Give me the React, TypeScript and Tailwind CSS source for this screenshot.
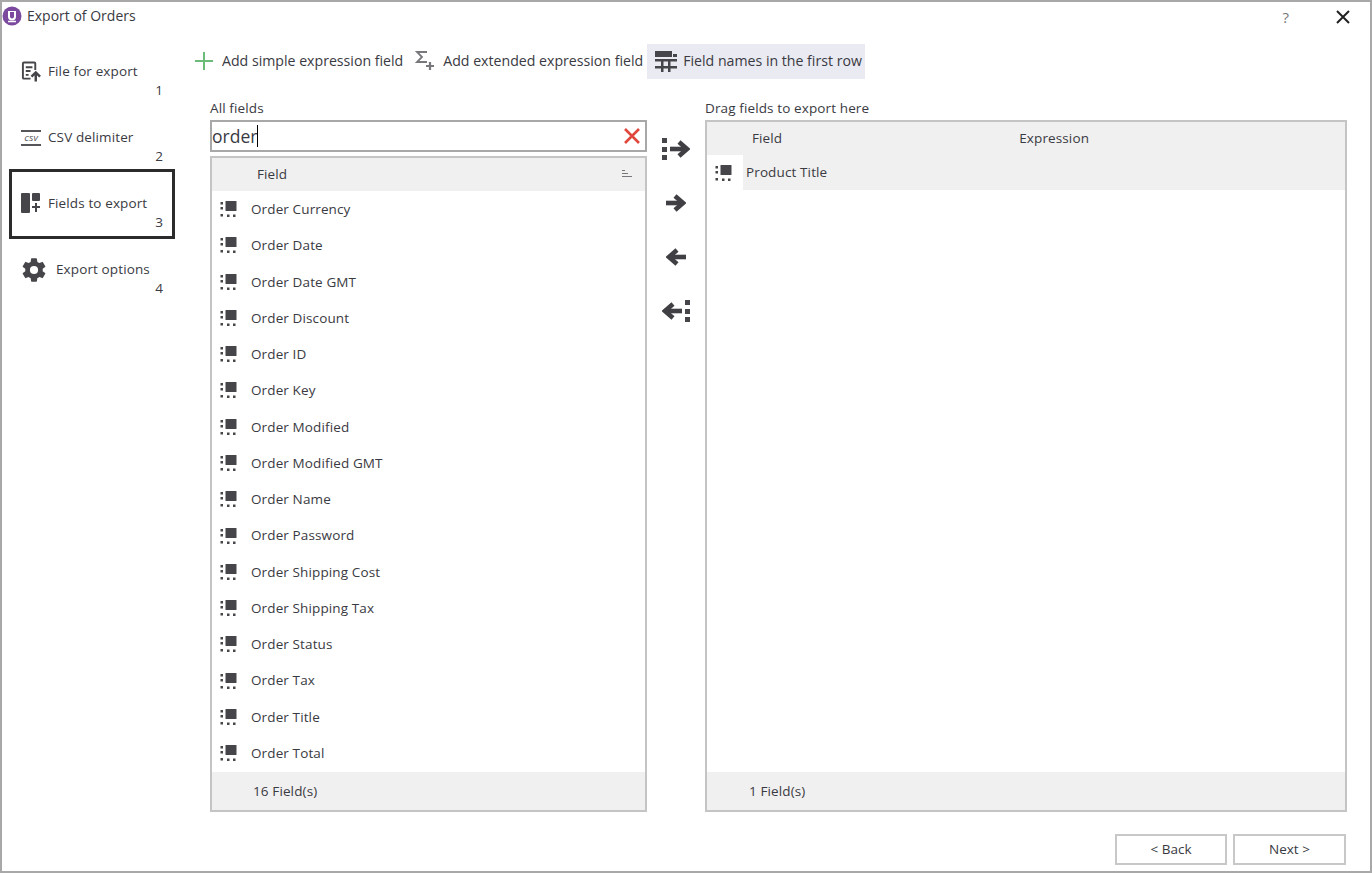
import React from "react";

const fields = ["Order Currency","Order Date","Order Date GMT","Order Discount","Order ID","Order Key","Order Modified","Order Modified GMT","Order Name","Order Password","Order Shipping Cost","Order Shipping Tax","Order Status","Order Tax","Order Title","Order Total"];

const FieldIcon = () => (
  <svg width="18" height="18" viewBox="0 0 18 18" fill="#45454a" className="shrink-0">
    <rect x="5.5" y="1" width="11" height="10" rx="0.5" />
    <rect x="0.5" y="2" width="2.5" height="2.5" /><rect x="0.5" y="7" width="2.5" height="2.5" /><rect x="0.5" y="14" width="2.5" height="2.5" />
    <rect x="7" y="14.5" width="2.5" height="2.5" /><rect x="13" y="14.5" width="2.5" height="2.5" />
  </svg>
);

const Arrow = ({ left = false }: { left?: boolean }) => (
  <svg width="20" height="18" viewBox="0 0 20 18" fill="none" stroke="#3f3f44" strokeWidth="4.6" className={left ? "rotate-180" : ""}>
    <path d="M0 9h16" /><path d="M9 2l8 7-8 7" />
  </svg>
);

const Dots = () => (
  <div className="flex flex-col gap-[3.5px]">
    <div className="w-[5px] h-[5px] bg-[#45454a]" /><div className="w-[5px] h-[5px] bg-[#45454a]" /><div className="w-[5px] h-[5px] bg-[#45454a]" />
  </div>
);

const NavItem = ({ icon, label, num, active, gap = "gap-2" }: { icon: React.ReactNode; label: string; num: string; active?: boolean; gap?: string }) => (
  <div className={`w-[166px] h-[70px] ml-[7px] flex flex-col ${active ? "border-[3px] border-[#2b2b2b]" : "border-[3px] border-transparent"}`}>
    <div className={`flex items-center ${gap} pl-[9px] pt-[22px] h-[41px]`}>
      <div className="w-[20px] h-[22px] flex items-center justify-center shrink-0">{icon}</div>
      <span>{label}</span>
    </div>
    <div className="text-right pr-[9px] leading-[18px]">{num}</div>
  </div>
);

export default function App() {
  return (
    <div className="w-[1372px] h-[873px] border-2 border-[#a8a8a8] bg-white flex flex-col overflow-hidden text-[13.5px] text-[#3a3a42] font-['Open_Sans','Noto_Sans',sans-serif]">
      <div className="h-[30px] flex items-start pt-[3px] shrink-0">
        <svg width="20" height="20" viewBox="0 0 20 20" className="mr-[5px] mt-[1px]">
          <circle cx="10" cy="10" r="9.5" fill="#7b4a9e" />
          <path d="M6 5h8v5.5a4 4 0 0 1-8 0z" fill="#fff" />
          <path d="M8 6v4.5a2 2 0 0 0 4 0V6z" fill="#7b4a9e" />
          <path d="M6 15.5h8" stroke="#fff" strokeWidth="1.5" />
        </svg>
        <span className="text-[14px] leading-[22px]">Export of Orders</span>
        <span className="ml-auto text-[15px] leading-[22px] mt-[1px] text-[#77777c]">?</span>
        <svg width="14" height="14" viewBox="0 0 14 14" className="ml-[47px] mr-[20px] mt-[5px]" stroke="#222" strokeWidth="2"><path d="M1 1l12 12M13 1L1 13" /></svg>
      </div>
      <div className="flex flex-1 min-h-0">
        <div className="w-[189px] shrink-0 flex flex-col pt-[5px] font-medium tracking-[0.12px]">
          <NavItem label="File for export" num="1" gap="gap-[7px]" icon={
            <svg width="21" height="21" viewBox="0 0 21 21" fill="none" stroke="#45454a" strokeWidth="2">
              <path d="M10 18H3a1 1 0 0 1-1-1V2a1 1 0 0 1 1-1h11a1 1 0 0 1 1 1v7" /><path d="M5 6h7M5 10h5M5 14h3" />
              <path d="M15.500 21v-9M11 16l4.500-4.500L20 16" strokeWidth="2.6" />
            </svg>} />
          <div className="-mt-[4px]" />
          <NavItem label="CSV delimiter" num="2" gap="gap-[7px]" icon={
            <div className="w-[20px] flex flex-col items-center border-y-2 border-[#55555a] h-[16px] justify-center text-[8px] leading-none italic font-normal">CSV</div>} />
          <div className="-mt-[4px]" />
          <NavItem active label="Fields to export" num="3" gap="gap-[7px]" icon={
            <svg width="20" height="21" viewBox="0 0 20 21" fill="#45454a">
              <rect x="0" y="0" width="9" height="20" rx="1" /><rect x="11" y="0" width="8" height="8" rx="1" />
              <path d="M14 10h2v3h3v2h-3v4h-2v-4h-3v-2h3z" />
            </svg>} />
          <div className="-mt-[4px]" />
          <NavItem label="Export options" num="4" gap="gap-[15px]" icon={
            <svg width="28" height="28" viewBox="0 0 24 24" fill="#45454a" className="shrink-0 ml-[5px]">
              <path d="M19.43 12.98c.04-.32.07-.64.07-.98s-.03-.66-.07-.98l2.11-1.65a.5.5 0 0 0 .12-.64l-2-3.46a.5.5 0 0 0-.61-.22l-2.49 1a7.3 7.3 0 0 0-1.69-.98l-.38-2.65A.49.49 0 0 0 14 2h-4a.49.49 0 0 0-.49.42l-.38 2.65c-.61.25-1.17.59-1.69.98l-2.49-1a.49.49 0 0 0-.61.22l-2 3.46a.49.49 0 0 0 .12.64l2.11 1.65c-.04.32-.07.65-.07.98s.03.66.07.98l-2.11 1.65a.5.5 0 0 0-.12.64l2 3.46c.12.22.39.3.61.22l2.49-1c.52.4 1.08.73 1.69.98l.38 2.65c.03.24.24.42.49.42h4c.25 0 .46-.18.49-.42l.38-2.65c.61-.25 1.17-.59 1.69-.98l2.49 1c.23.09.49 0 .61-.22l2-3.46a.5.5 0 0 0-.12-.64zM12 15.500a3.500 3.500 0 1 1 0-7 3.500 3.500 0 0 1 0 7z" />
            </svg>} />
        </div>
        <div className="flex-1 min-w-0 flex flex-col pr-[23px]">
          <div className="h-[36px] mt-[11px] flex items-center text-[14.15px]">
            <svg width="20" height="20" viewBox="0 0 20 20" className="ml-[3px] mr-[8px]" stroke="#6cbb78" strokeWidth="2"><path d="M10 1v18M1 10h18" /></svg>
            <span className="whitespace-nowrap">Add simple expression field</span>
            <svg width="22" height="22" viewBox="0 0 22 22" className="ml-[11px] mr-[7px]" fill="none" stroke="#77777c" strokeWidth="1.8"><path d="M13 2H3l5 5-5 5h10" /><path d="M16 12v8M12 16h8" strokeWidth="2.2" /></svg>
            <span className="whitespace-nowrap">Add extended expression field</span>
            <div className="ml-[4px] h-[35px] w-[218px] bg-[#eaeaf2] flex items-center pl-[8px] gap-[6px]">
              <svg width="22" height="21" viewBox="0 0 22 21" fill="#45454a"><rect x="0" y="0" width="17" height="6" /><rect x="18" y="3" width="4" height="3" /><rect x="0" y="8" width="22" height="2.500" /><rect x="0" y="15" width="22" height="2.500" /><rect x="6" y="8" width="2.500" height="13" /><rect x="13" y="8" width="2.500" height="13" /></svg>
              <span className="whitespace-nowrap">Field names in the first row</span>
            </div>
          </div>
          <div className="flex flex-1 min-h-0 mt-[21px] font-medium tracking-[0.12px]">
            <div className="w-[437px] shrink-0 flex flex-col ml-[19px]">
              <div className="h-[16px] leading-[16px] mb-[4px]">All fields</div>
              <div className="h-[32px] border-2 border-[#a8a8a8] flex items-center pl-0 pr-[4px] text-[17.5px] font-normal tracking-normal shrink-0">
                <span>order</span><span className="w-[1px] h-[22px] bg-black" />
                <svg width="18" height="18" viewBox="0 0 18 18" className="ml-auto" stroke="#e0483e" strokeWidth="2.600"><path d="M2 2l14 14M16 2L2 16" /></svg>
              </div>
              <div className="mt-[4px] flex-1 min-h-0 border-2 border-[#c4c4c4] flex flex-col">
                <div className="h-[33px] shrink-0 bg-[#f0f0f0] flex items-center pl-[45px] pr-[12px]">
                  <span>Field</span>
                  <svg width="11" height="9" viewBox="0 0 11 9" className="ml-auto" fill="#77777c"><rect width="3" height="1" /><rect y="3" width="6" height="1" /><rect y="6" width="10" height="1" /></svg>
                </div>
                <div className="flex-1 flex flex-col">
                  {fields.map((f) => (
                    <div key={f} className="h-[36.27px] flex items-center pl-[8px] gap-[13px]">
                      <FieldIcon /><span>{f}</span>
                    </div>
                  ))}
                </div>
                <div className="h-[38px] shrink-0 bg-[#f0f0f0] flex items-center pl-[41px]">16 Field(s)</div>
              </div>
            </div>
            <div className="w-[58px] shrink-0 flex flex-col items-center pt-[40px] gap-[36px]">
              <div className="h-[18px] flex items-center gap-[3px]"><Dots /><Arrow /></div>
              <div className="h-[18px] flex items-center"><Arrow /></div>
              <div className="h-[18px] flex items-center"><Arrow left /></div>
              <div className="h-[18px] flex items-center gap-[3px]"><Arrow left /><Dots /></div>
            </div>
            <div className="flex-1 min-w-0 flex flex-col">
              <div className="h-[16px] leading-[16px] mb-[4px]">Drag fields to export here</div>
              <div className="flex-1 min-h-0 border-2 border-[#c4c4c4] flex flex-col">
                <div className="h-[33px] shrink-0 bg-[#f0f0f0] flex items-center">
                  <span className="ml-[45px]">Field</span>
                  <span className="ml-[237px]">Expression</span>
                </div>
                <div className="h-[35px] shrink-0 flex items-center">
                  <div className="w-[36px] h-full bg-white flex items-center pl-[8px]"><FieldIcon /></div>
                  <div className="flex-1 h-full bg-[#f0f0f0] flex items-center pl-[3px]">Product Title</div>
                </div>
                <div className="flex-1" />
                <div className="h-[38px] shrink-0 bg-[#f0f0f0] flex items-center pl-[42px]">1 Field(s)</div>
              </div>
            </div>
          </div>
          <div className="h-[59px] shrink-0 flex justify-end items-start pt-[22px] pr-[1px] gap-[6px] font-medium">
            <div className="w-[112px] h-[31px] border-2 border-[#c8c8c8] flex items-center justify-center">&lt; Back</div>
            <div className="w-[113px] h-[31px] border-2 border-[#c8c8c8] flex items-center justify-center">Next &gt;</div>
          </div>
        </div>
      </div>
    </div>
  );
}
